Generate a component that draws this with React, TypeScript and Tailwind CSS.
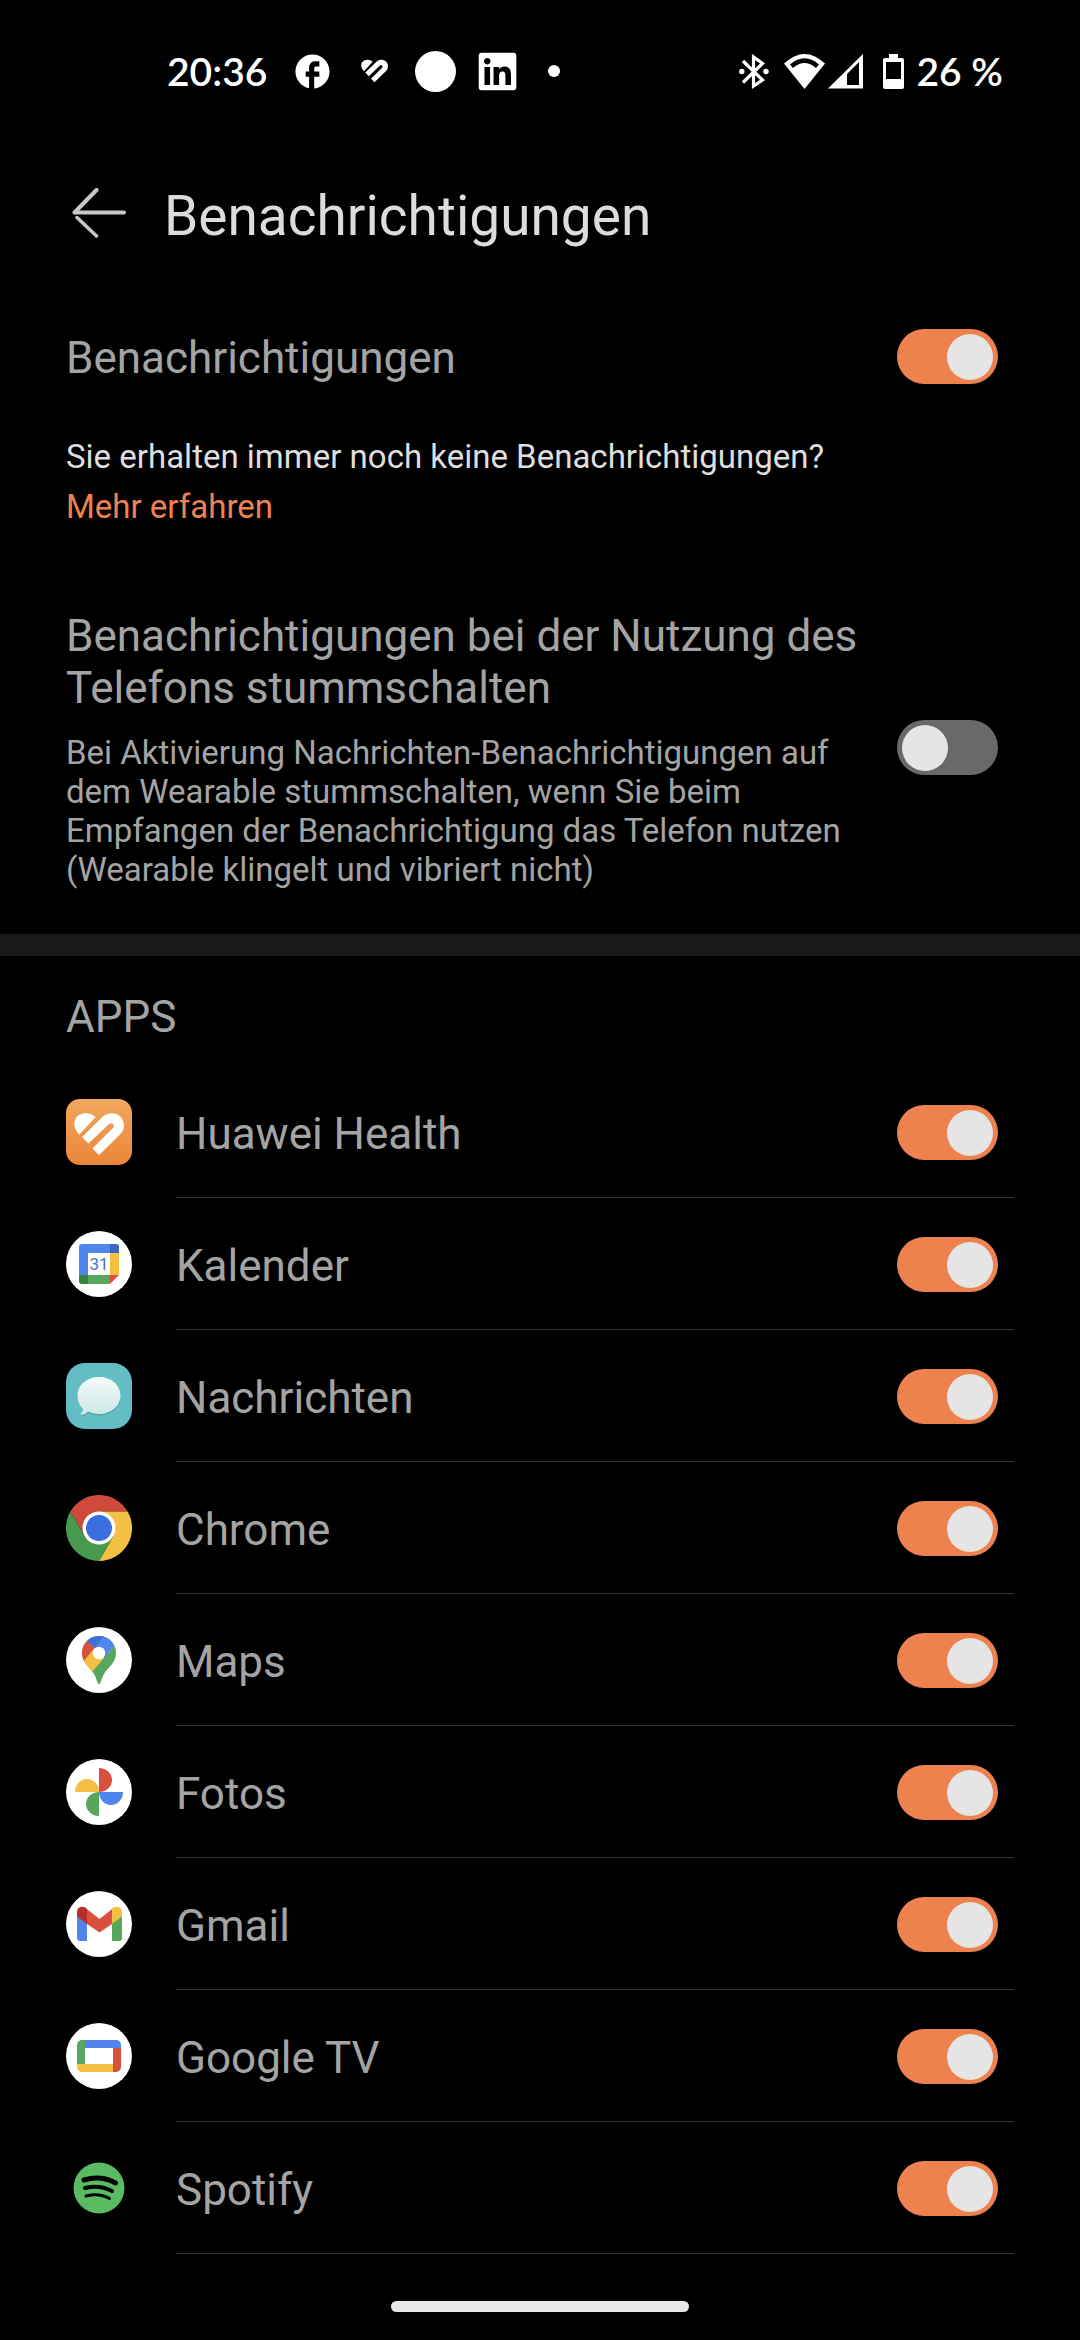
import { useState } from 'react';
import type { ReactNode } from 'react';
import { MdFacebook } from 'react-icons/md';
import { FaLinkedin } from 'react-icons/fa';

const HeartMark = () => (
  <>
    <path d="M13.5 35.5C6.5 29 6.500 19 14 15.500C19 13 26 14 29.500 18Z" />
    <path d="M16 38L37 17.500C45 10.500 58 15 58 26.500C58 30.500 56 33.500 53 36.500L33 56L26.500 49.500L47 29C49.500 26 46 22.500 43 25L22.500 44.500Z" />
  </>
);

const HealthIcon = () => (
  <svg viewBox="0 0 66 66" className="size-full">
    <linearGradient id="health" x1="0" y1="0" x2="0" y2="1">
      <stop offset="0" stopColor="#f2a75e" />
      <stop offset="1" stopColor="#ea8538" />
    </linearGradient>
    <rect width="66" height="66" rx="14" fill="url(#health)" />
    <g fill="#fff">
      <HeartMark />
    </g>
  </svg>
);

const CalendarIcon = () => (
  <svg viewBox="0 0 66 66" className="size-full">
    <circle cx="33" cy="33" r="33" fill="#fff" />
    <path d="M16 13H44V22H22V44H13V16A3 3 0 0 1 16 13Z" fill="#5085ed" />
    <path d="M44 13H50A3 3 0 0 1 53 16V22H44Z" fill="#3a66c4" />
    <path d="M44 22H53V44H44Z" fill="#f2bf42" />
    <path d="M22 44H44V53H22Z" fill="#58a65c" />
    <path d="M13 44H22V53H16A3 3 0 0 1 13 50Z" fill="#3b8040" />
    <path d="M44 44H53L44 53Z" fill="#d9503f" />
    <text x="33" y="39" textAnchor="middle" fontSize="17" fill="#4072d8">31</text>
  </svg>
);

const MessagesIcon = () => (
  <svg viewBox="0 0 66 66" className="size-full">
    <linearGradient id="bubble" x1="0" y1="0" x2="0" y2="1">
      <stop offset="0" stopColor="#f6faf9" />
      <stop offset="1" stopColor="#cde8e6" />
    </linearGradient>
    <rect width="66" height="66" rx="19" fill="#62bec4" />
    <path d="M33 15.500C45 15.500 54.500 23 54.500 33.500C54.500 44 45 52.500 33 52.500C29 52.500 25 51.500 22 50C20 52 17 53.500 14 53.500C16 51 16.500 49 17 47C13 43 11.500 39 11.500 33.500C11.500 23 21 15.500 33 15.500Z" fill="#4fa3a9" />
    <path d="M33 14C45 14 54.500 22 54.500 32.500C54.500 43 45 51 33 51C29 51 25 50 22 48.500C20 51 17 52 14 52C16 50 16.500 48 17 46C13 42 11.500 38 11.500 32.500C11.500 22 21 14 33 14Z" fill="url(#bubble)" />
  </svg>
);

const ChromeIcon = () => (
  <svg viewBox="0 0 66 66" className="size-full">
    <path d="M4.4 16.500A33 33 0 0 1 61.600 16.500H33L18.700 41.250Z" fill="#d04a3b" />
    <path d="M61.600 16.500A33 33 0 0 1 33 66L47.300 41.250L33 16.500Z" fill="#f1c044" />
    <path d="M33 66A33 33 0 0 1 4.400 16.500L18.700 41.250H47.300Z" fill="#479a4d" />
    <circle cx="33" cy="33" r="16.500" fill="#fff" />
    <circle cx="33" cy="33" r="13" fill="#3b6fdf" />
  </svg>
);

const MapsIcon = () => (
  <svg viewBox="0 0 66 66" className="size-full">
    <clipPath id="pin">
      <path d="M33 57C31 57 31 52 28 47C24 40 16 36 16 26A17 17 0 0 1 50 26C50 36 42 40 38 47C35 52 35 57 33 57Z" />
    </clipPath>
    <circle cx="33" cy="33" r="33" fill="#fff" />
    <g clipPath="url(#pin)">
      <rect width="66" height="66" fill="#58a65c" />
      <path d="M24 47.500L49 18L16 0L0 40Z" fill="#f2bf42" />
      <path d="M39 7L28 20L33 26L38 31L51 15.500V0Z" fill="#5085ed" />
      <path d="M19 13L28.500 21L39.500 7L30 0Z" fill="#3f6fd3" />
      <path d="M19 13L28.500 21L16 36L8 25Z" fill="#d9503f" />
    </g>
    <circle cx="33" cy="26" r="6.300" fill="#fff" />
  </svg>
);

const PhotosIcon = () => (
  <svg viewBox="0 0 66 66" className="size-full">
    <circle cx="33" cy="33" r="33" fill="#fff" />
    <path d="M33 9A13 12 0 0 1 33 33Z" fill="#d9503f" />
    <path d="M57 33A12 13 0 0 1 33 33Z" fill="#5085ed" />
    <path d="M33 57A13 12 0 0 1 33 33Z" fill="#58a65c" />
    <path d="M9 33A12 13 0 0 1 33 33Z" fill="#f2bf42" />
  </svg>
);

const GmailIcon = () => (
  <svg viewBox="0 0 66 66" className="size-full">
    <circle cx="33" cy="33" r="33" fill="#fff" />
    <path d="M11 25L21 32V50H14A3 3 0 0 1 11 47Z" fill="#5085ed" />
    <path d="M56 25L46 32V50H53A3 3 0 0 0 56 47Z" fill="#58a65c" />
    <path d="M19 16.500L33.500 28L48 16.500L46 33L33.500 41.500L21 33Z" fill="#d9503f" />
    <path d="M11 21C11 16 16.500 14.500 20 17L21 18V33L11 25.500Z" fill="#b5302a" />
    <path d="M56 21C56 16 50.500 14.500 47 17L46 18V33L56 25.500Z" fill="#f2bf42" />
  </svg>
);

const TvIcon = () => (
  <svg viewBox="0 0 66 66" className="size-full">
    <circle cx="33" cy="33" r="33" fill="#fff" />
    <path d="M19 17H50A5 5 0 0 1 55 22V25H19Z" fill="#5085ed" />
    <path d="M47 25H55V44A5 5 0 0 1 50 49H47Z" fill="#d9503f" />
    <path d="M11 41H47V49H16A5 5 0 0 1 11 44Z" fill="#f2bf42" />
    <path d="M16 17H19V41H11V22A5 5 0 0 1 16 17Z" fill="#58a65c" />
  </svg>
);

const SpotifyIcon = () => (
  <svg viewBox="0 0 66 66" className="size-full" fill="none" stroke="#000" strokeLinecap="round">
    <circle cx="33" cy="33" r="25.500" fill="#5abb63" stroke="none" />
    <path d="M18 25Q35 20 49.500 28" strokeWidth="5" />
    <path d="M19 33Q33 29.500 46 36" strokeWidth="4" />
    <path d="M20 41Q33 37.500 43.500 43.500" strokeWidth="3" />
  </svg>
);

const apps = [
  { icon: HealthIcon, name: 'Huawei Health' },
  { icon: CalendarIcon, name: 'Kalender' },
  { icon: MessagesIcon, name: 'Nachrichten' },
  { icon: ChromeIcon, name: 'Chrome' },
  { icon: MapsIcon, name: 'Maps' },
  { icon: PhotosIcon, name: 'Fotos' },
  { icon: GmailIcon, name: 'Gmail' },
  { icon: TvIcon, name: 'Google TV' },
  { icon: SpotifyIcon, name: 'Spotify' },
];

function Toggle({ id, initial = true }: { id: string; initial?: boolean }) {
  const [on, setOn] = useState(initial);
  return (
    <input
      id={id}
      type="checkbox"
      role="switch"
      checked={on}
      onChange={() => setOn(!on)}
      className="h-[55px] w-[101px] shrink-0 appearance-none rounded-full bg-[#696969] p-[5px] before:block before:size-[46px] before:rounded-full before:bg-[#e5e5e5] before:content-[''] checked:bg-[#ee824f] checked:before:translate-x-[45px]"
    />
  );
}

function StatusBar() {
  return (
    <div className="flex h-[142px] items-center justify-between pr-[77px] pl-[167px] font-[Lato,sans-serif] text-[39px] font-semibold text-white">
      <div className="flex items-center">
        <span>20:36</span>
        <MdFacebook size={41} className="ml-[25px]" />
        <svg viewBox="8 13 50 44" className="ml-[28px] h-[24px] w-[27px]" fill="currentColor">
          <HeartMark />
        </svg>
        <span className="ml-[27px] size-[41px] rounded-full bg-white" />
        <FaLinkedin size={43} className="ml-[20px]" />
        <span className="ml-[29px] size-[12px] rounded-full bg-white" />
      </div>
      <div className="flex items-center">
        <svg viewBox="0 0 30 35" className="mr-[15px] h-[35px] w-[30px]" fill="none" stroke="currentColor" strokeWidth="3.200">
          <path d="M4 7L23.500 26L14.500 32V3L23.500 9.500L4 28.500" />
          <circle cx="2.800" cy="17.500" r="2.700" fill="currentColor" stroke="none" />
          <circle cx="27" cy="17.500" r="2.700" fill="currentColor" stroke="none" />
        </svg>
        <svg viewBox="0 0 41 35" className="mr-[3px] h-[35px] w-[41px]" fill="currentColor">
          <path d="M0 9.500Q20.500 -9.500 41 9.500L20.500 35Z" />
          <path d="M6 10.500Q20.500 -2 35 10.500L32 14Q20.500 4 9 14Z" fill="#000" />
        </svg>
        <svg viewBox="0 0 35 35" className="mr-[20px] size-[35px]" fill="currentColor">
          <path d="M0 34.500L35 0V34.500Z" />
          <path d="M19 20L31 8V31H19Z" fill="#000" />
        </svg>
        <svg viewBox="0 0 21 35" className="mr-[12px] h-[35px] w-[21px]" fill="currentColor">
          <path d="M6 0H15V4H19A2 2 0 0 1 21 6V33A2 2 0 0 1 19 35H2A2 2 0 0 1 0 33V6A2 2 0 0 1 2 4H6Z" />
          <path d="M3 8H18V25H3Z" fill="#000" />
        </svg>
        <span>26 %</span>
      </div>
    </div>
  );
}

function SettingRow({ children }: { children: ReactNode }) {
  return <div className="flex items-center justify-between pr-[82px] pl-[66px]">{children}</div>;
}

export default function App() {
  return (
    <div className="flex min-h-screen flex-col bg-black font-[Roboto,sans-serif] text-[44px] leading-[52px] text-[#a4a4a4]">
      <StatusBar />

      <header className="flex h-[142px] items-center gap-[38px] pl-[72px]">
        <button type="button" aria-label="Zurück" className="text-[#c8c8c8]">
          <svg viewBox="0 0 54 50" className="h-[50px] w-[54px]" fill="none" stroke="currentColor" strokeWidth="4" strokeLinecap="round">
            <path d="M24.500 2L2.500 24.500H52" strokeLinejoin="round" />
            <path d="M5 29.500L24.500 48" strokeWidth="3.500" />
          </svg>
        </button>
        <h1 className="pt-1.5 text-[55px] leading-[64px] text-[#dcdcdc]">Benachrichtigungen</h1>
      </header>

      <main>
        <div className="pt-[45px]">
          <SettingRow>
            <label htmlFor="all" className="pt-[3px]">Benachrichtigungen</label>
            <Toggle id="all" />
          </SettingRow>
        </div>

        <div className="px-[66px] pt-[48px] text-[33px] leading-[50px] text-[#dedede]">
          <p>Sie erhalten immer noch keine Benachrichtigungen?</p>
          <a href="#mehr" className="block text-[#ee824f]">Mehr erfahren</a>
        </div>

        <section className="border-b-[22px] border-[#1a1a1a] pt-[74px] pb-[45px]">
          <SettingRow>
            <div className="max-w-[800px] pt-1">
              <label htmlFor="mute">Benachrichtigungen bei der Nutzung des Telefons stummschalten</label>
              <p className="mt-[19px] text-[33px] leading-[39px]">
                Bei Aktivierung Nachrichten-Benachrichtigungen auf dem Wearable stummschalten, wenn Sie beim Empfangen der Benachrichtigung das Telefon nutzen (Wearable klingelt und vibriert nicht)
              </p>
            </div>
            <Toggle id="mute" initial={false} />
          </SettingRow>
        </section>

        <section>
          <h2 className="px-[66px] pt-[35px] pb-[23px]">APPS</h2>
          <ul>
            {apps.map((app, index) => (
              <li key={app.name} className="flex items-center gap-[44px] pl-[66px]">
                <span className="size-[66px] shrink-0">
                  <app.icon />
                </span>
                <div className="mr-[66px] flex h-[132px] grow items-center justify-between border-b border-[#333] pt-0.5 pr-4">
                  <label htmlFor={`app-${index}`} className="pt-0.5">{app.name}</label>
                  <Toggle id={`app-${index}`} />
                </div>
              </li>
            ))}
          </ul>
        </section>
      </main>

      <div className="mx-auto mt-auto mb-[28px] h-[11px] w-[298px] rounded-full bg-[#e8e8e8]" />
    </div>
  );
}
